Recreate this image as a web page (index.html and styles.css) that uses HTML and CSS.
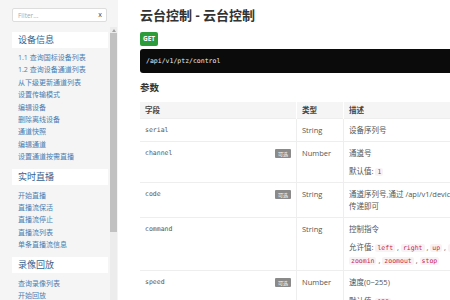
FILE: index.html
```html
<!DOCTYPE html>
<html lang="zh-CN">
<head>
    <meta charset="UTF-8">
    <meta name="viewport" content="width=device-width, initial-scale=1.0">
    <title>云台控制 - 云台控制</title>
    <link rel="stylesheet" href="styles.css">
</head>
<body>
    <div class="layout">
        <aside class="sidebar">
            <div class="filter">
                <input type="text" class="filter-input" placeholder="Filter...">
                <span class="filter-clear">x</span>
            </div>
            <nav class="toc">
                <div class="toc-head">设备信息</div>
                <a href="#">1.1 查询国标设备列表</a>
                <a href="#">1.2 查询设备通道列表</a>
                <a href="#">从下级更新通道列表</a>
                <a href="#">设置传输模式</a>
                <a href="#">编辑设备</a>
                <a href="#">删除离线设备</a>
                <a href="#">通道快照</a>
                <a href="#">编辑通道</a>
                <a href="#">设置通道按需直播</a>
                <div class="toc-head">实时直播</div>
                <a href="#">开始直播</a>
                <a href="#">直播流保活</a>
                <a href="#">直播流停止</a>
                <a href="#">直播流列表</a>
                <a href="#">单条直播流信息</a>
                <div class="toc-head">录像回放</div>
                <a href="#">查询录像列表</a>
                <a href="#">开始回放</a>
                <div class="scrollbar">
                    <div class="scrollbar-arrow"></div>
                    <div class="scrollbar-thumb"></div>
                </div>
            </nav>
        </aside>
        <main class="content">
            <h1 class="page-title">云台控制 - 云台控制</h1>
            <span class="method">GET</span>
            <pre class="endpoint">/api/v1/ptz/control</pre>
            <h2 class="section-title">参数</h2>
            <table class="params">
                <thead>
                    <tr>
                        <th class="col-field">字段</th>
                        <th class="col-type">类型</th>
                        <th class="col-desc">描述</th>
                    </tr>
                </thead>
                <tbody>
                    <tr>
                        <td class="field">serial</td>
                        <td>String</td>
                        <td class="desc"><p>设备序列号</p></td>
                    </tr>
                    <tr>
                        <td class="field">channel <span class="optional">可选</span></td>
                        <td>Number</td>
                        <td class="desc">
                            <p>通道号</p>
                            <p>默认值: <code>1</code></p>
                        </td>
                    </tr>
                    <tr>
                        <td class="field">code <span class="optional">可选</span></td>
                        <td>String</td>
                        <td class="desc">
                            <p>通道序列号,通过 /api/v1/device/channellist 获取的 ChannelList.Code<br>传递即可</p>
                        </td>
                    </tr>
                    <tr>
                        <td class="field">command</td>
                        <td>String</td>
                        <td class="desc">
                            <p>控制指令</p>
                            <p>允许值: <code>left</code> , <code>right</code> , <code>up</code> , <code>down</code> , <code>upleft</code> , <code>upright</code> , <code>downleft</code> , <code>downright</code> ,<br><code>zoomin</code> , <code>zoomout</code> , <code>stop</code></p>
                        </td>
                    </tr>
                    <tr>
                        <td class="field">speed <span class="optional">可选</span></td>
                        <td>Number</td>
                        <td class="desc">
                            <p>速度(0~255)</p>
                            <p>默认值: <code>129</code></p>
                        </td>
                    </tr>
                </tbody>
            </table>
        </main>
    </div>
</body>
</html>
```

FILE: styles.css
```css
/* 基础 */
body {
    margin: 0;
    font-family: "Open Sans", "Noto Sans CJK SC", sans-serif;
    color: #333;
    background: #fff;
    overflow: hidden;
}

.layout {
    display: flex;
    align-items: flex-start;
    height: 300px;
}

/* 侧边栏 */
.sidebar {
    width: 118px;
    height: 100%;
    flex-shrink: 0;
    background: #f5f5f5;
    display: flex;
    flex-direction: column;
}

.filter {
    position: relative;
    margin: 8px 11px 5px 12px;
}

.filter-input {
    display: block;
    width: 100%;
    height: 14px;
    box-sizing: border-box;
    border: 1px solid #ddd;
    border-radius: 2px;
    padding: 0 5px;
    font-family: "Open Sans", sans-serif;
    font-size: 6.5px;
    background: #fff;
}

.filter-input::placeholder {
    color: #aaa;
}

.filter-clear {
    position: absolute;
    right: 5px;
    top: 2px;
    font-size: 7px;
    line-height: 10px;
    color: #444;
}

.toc {
    position: relative;
    flex: 1;
    overflow: hidden;
    padding-top: 5px;
}

/* 模拟滚动条 */
.scrollbar {
    position: absolute;
    top: 0;
    right: 1px;
    bottom: 0;
    width: 7px;
    background: #ececec;
}

.scrollbar-arrow {
    width: 0;
    height: 0;
    margin: 2px auto 0;
    border-left: 2.5px solid transparent;
    border-right: 2.5px solid transparent;
    border-bottom: 3px solid #a3a3a3;
}

.scrollbar-thumb {
    margin-top: 1px;
    height: 199px;
    background: #c1c1c1;
}

.toc-head {
    margin: 0 10px 4px 12px;
    height: 16px;
    line-height: 16px;
    padding-left: 6px;
    background: #fff;
    font-size: 9px;
    color: #34618f;
}

.toc a + .toc-head {
    margin-top: 5px;
    margin-bottom: 5px;
}

.toc a {
    display: block;
    padding-left: 18px;
    font-size: 7px;
    line-height: 12.4px;
    color: #4a7fb3;
    text-decoration: none;
    white-space: nowrap;
}

/* 内容 */
.content {
    flex: 1;
    min-width: 0;
    padding-left: 22px;
}

.page-title {
    margin: 6px 0 8px;
    font-size: 13px;
    line-height: 18px;
    font-weight: bold;
}

.method {
    display: block;
    width: fit-content;
    height: 14px;
    line-height: 14px;
    padding: 0 3px;
    border-radius: 2px;
    background: #2e9b3b;
    color: #fff;
    font-size: 6.5px;
    font-weight: bold;
}

.endpoint {
    margin: 3px 0 0;
    height: 24px;
    line-height: 24px;
    padding: 0 6px;
    border-radius: 3px;
    background: #0b0b0b;
    color: #eee;
    font-family: "DejaVu Sans Mono", monospace;
    font-size: 6.5px;
    width: 400px;
}

.section-title {
    margin: 9px 0 8px;
    font-size: 9.5px;
    line-height: 12px;
    font-weight: bold;
}

.params {
    border-collapse: collapse;
    table-layout: fixed;
    width: 600px;
    font-size: 7.5px;
}

.params th {
    background: #f5f5f5;
    text-align: left;
    font-weight: bold;
    padding: 0 5px;
    height: 16px;
    line-height: 16px;
    color: #444;
}

.col-field {
    width: 146px;
}

.col-type {
    width: 36px;
}

.params td {
    vertical-align: top;
    padding: 5px 5px 4px;
    line-height: 12px;
    border-top: 1px solid #eee;
    color: #555;
}

.params td + td {
    border-left: 1px solid #eee;
}

.params th + th {
    border-left: 1px solid #fff;
}

.params .field {
    font-family: "DejaVu Sans Mono", monospace;
    font-size: 6.5px;
    color: #555;
}

.optional {
    float: right;
    margin-top: 2px;
    padding: 0 3px;
    height: 9px;
    line-height: 9px;
    background: #8a8a8a;
    color: #fff;
    font-family: "Noto Sans CJK SC", sans-serif;
    font-size: 5px;
    border-radius: 1px;
}

.desc {
    color: #888;
    white-space: nowrap;
}

.desc p {
    margin: 0;
    line-height: 12.5px;
}

.desc p + p {
    margin-top: 6px;
}

.desc code {
    font-family: "DejaVu Sans Mono", monospace;
    font-size: 6.5px;
    line-height: 1;
    color: #c7254e;
    background: #f9f2f4;
    padding: 0 2px;
    border-radius: 2px;
}
```
